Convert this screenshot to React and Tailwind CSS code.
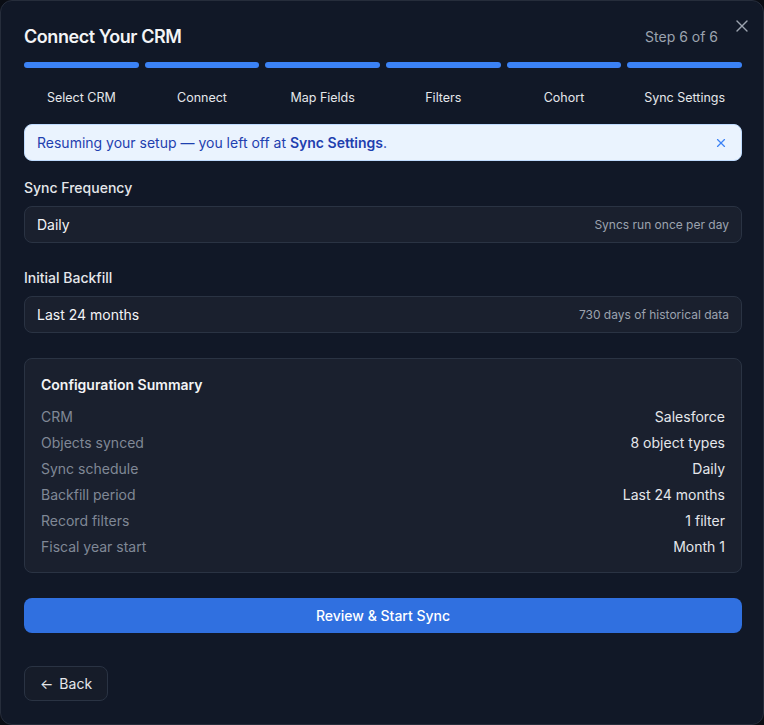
import React from "react";

const steps = ["Select CRM", "Connect", "Map Fields", "Filters", "Cohort", "Sync Settings"];
const rows = [
  ["CRM", "Salesforce"],
  ["Objects synced", "8 object types"],
  ["Sync schedule", "Daily"],
  ["Backfill period", "Last 24 months"],
  ["Record filters", "1 filter"],
  ["Fiscal year start", "Month 1"],
];

function XIcon({ className, sw = 2 }) {
  return (
    <svg viewBox="0 0 24 24" fill="none" stroke="currentColor" strokeWidth={sw} strokeLinecap="round" className={className}>
      <path d="M18 6 6 18" />
      <path d="m6 6 12 12" />
    </svg>
  );
}

export default function App() {
  return (
    <div className="min-h-[725px] w-[764px] bg-[#0a0d14]" style={{ fontFamily: "Inter, 'Noto Sans', sans-serif" }}>
      <div className="relative h-[725px] w-[764px] rounded-xl border border-[#262d3b] bg-[#111827] pl-[23px] pr-[21px] pt-[22px]">
        <button className="absolute right-[11px] top-[15px] text-[#9ca3af]">
          <XIcon className="h-[20px] w-[20px]" sw={1.6} />
        </button>
        <div className="flex items-center justify-between">
          <h2 className="text-[18px] font-semibold leading-[28px] tracking-[-0.025em] text-[#f3f4f6]">Connect Your CRM</h2>
          <span className="mr-[24px] text-[14px] leading-5 text-[#9ca3af]">Step 6 of 6</span>
        </div>
        <div className="mt-[11px] grid grid-cols-6 gap-1.5">
          {steps.map((s) => (
            <div key={s} className="h-[6px] rounded-full bg-[#3b82f6]" />
          ))}
        </div>
        <div className="mt-[21px] grid grid-cols-6 gap-1.5">
          {steps.map((s) => (
            <div key={s} className="text-center text-[12.5px] leading-[18px] text-[#e5e7eb]">{s}</div>
          ))}
        </div>
        <div className="mt-[17px] flex h-[37px] items-center justify-between rounded-lg border border-[#bfdbfe] bg-[#eaf3fe] pl-3 pr-3">
          <span className="text-[14px] text-[#1e40af]">
            Resuming your setup — you left off at <span className="font-semibold">Sync Settings</span>.
          </span>
          <XIcon className="mr-[1px] h-[14px] w-[14px] text-[#3b82f6]" />
        </div>

        <div className="mt-[17px]">
          <div className="text-[14px] font-medium leading-5 text-[#e5e7eb]">Sync Frequency</div>
          <div className="mt-2 flex h-[37px] items-center justify-between rounded-lg border border-[#2a3343] bg-[#1a202e] px-3">
            <span className="text-[14px] text-[#f3f4f6]">Daily</span>
            <span className="text-[12px] text-[#9ca3af]">Syncs run once per day</span>
          </div>
        </div>

        <div className="mt-[25px]">
          <div className="text-[14px] font-medium leading-5 text-[#e5e7eb]">Initial Backfill</div>
          <div className="mt-2 flex h-[37px] items-center justify-between rounded-lg border border-[#2a3343] bg-[#1a202e] px-3">
            <span className="text-[14px] text-[#f3f4f6]">Last 24 months</span>
            <span className="text-[12px] text-[#9ca3af]">730 days of historical data</span>
          </div>
        </div>

        <div className="mt-[25px] rounded-lg border border-[#2a3343] bg-[#1a202e] px-4 pb-[15px] pt-[16px]">
          <div className="text-[14px] font-semibold leading-5 text-[#f3f4f6]">Configuration Summary</div>
          <div className="mt-3 flex flex-col gap-1.5">
            {rows.map(([k, v]) => (
              <div key={k} className="flex justify-between text-[14px] leading-5">
                <span className="text-[#808896]">{k}</span>
                <span className="text-[#e5e7eb]">{v}</span>
              </div>
            ))}
          </div>
        </div>

        <button className="mt-[25px] flex h-[35px] w-full items-center justify-center rounded-lg bg-[#3070e0] text-[14px] font-medium text-white">
          Review &amp; Start Sync
        </button>

        <button className="mt-[33px] flex h-[35px] items-center gap-1.5 rounded-lg border border-[#2a3343] bg-[#161c29] px-[15px] text-[14px] text-[#e5e7eb]">
          <span>←</span>
          <span>Back</span>
        </button>
      </div>
    </div>
  );
}
